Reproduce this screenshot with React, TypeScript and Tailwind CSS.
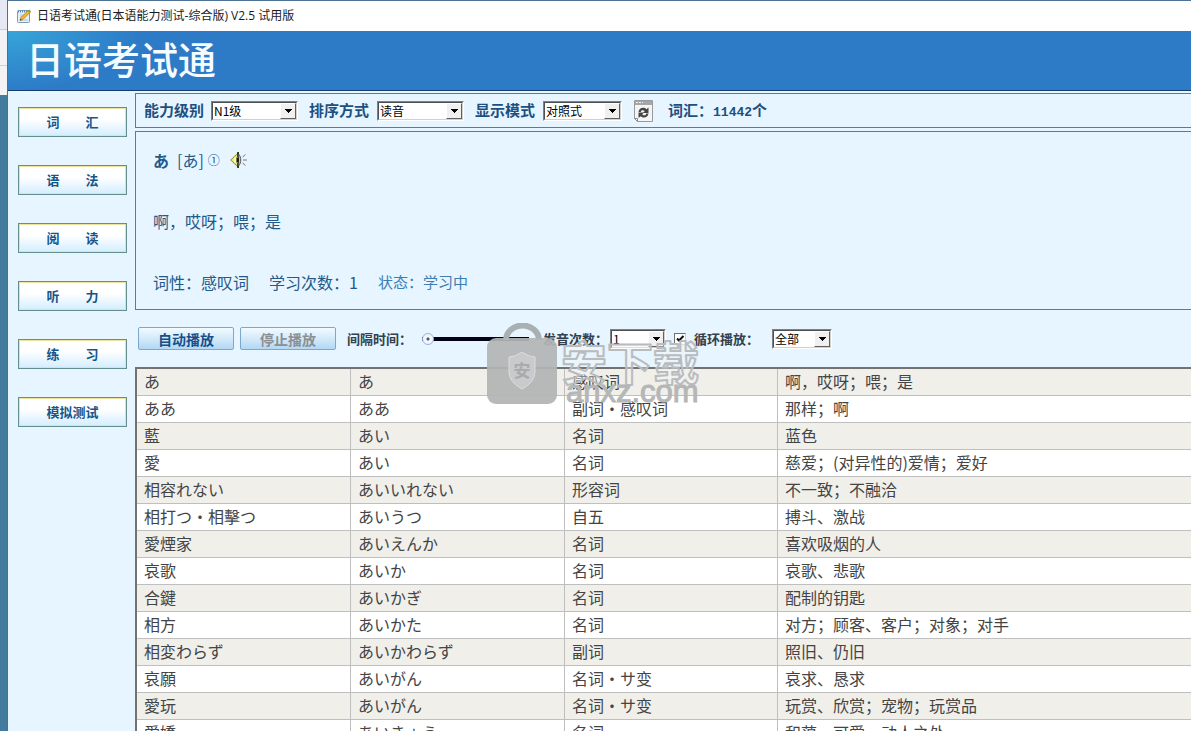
import { useId, useState } from 'react';

const NAV_ITEMS = ['词　　汇', '语　　法', '阅　　读', '听　　力', '练　　习', '模拟测试'];

const WORDS = [
    { word: 'あ', kana: 'あ', type: '感叹词', meaning: '啊，哎呀；喂；是' },
    { word: 'ああ', kana: 'ああ', type: '副词・感叹词', meaning: '那样；啊' },
    { word: '藍', kana: 'あい', type: '名词', meaning: '蓝色' },
    { word: '愛', kana: 'あい', type: '名词', meaning: '慈爱；(对异性的)爱情；爱好' },
    { word: '相容れない', kana: 'あいいれない', type: '形容词', meaning: '不一致；不融洽' },
    { word: '相打つ・相擊つ', kana: 'あいうつ', type: '自五', meaning: '搏斗、激战' },
    { word: '愛煙家', kana: 'あいえんか', type: '名词', meaning: '喜欢吸烟的人' },
    { word: '哀歌', kana: 'あいか', type: '名词', meaning: '哀歌、悲歌' },
    { word: '合鍵', kana: 'あいかぎ', type: '名词', meaning: '配制的钥匙' },
    { word: '相方', kana: 'あいかた', type: '名词', meaning: '对方；顾客、客户；对象；对手' },
    { word: '相変わらず', kana: 'あいかわらず', type: '副词', meaning: '照旧、仍旧' },
    { word: '哀願', kana: 'あいがん', type: '名词・サ变', meaning: '哀求、恳求' },
    { word: '愛玩', kana: 'あいがん', type: '名词・サ变', meaning: '玩赏、欣赏；宠物；玩赏品' },
    { word: '愛嬌', kana: 'あいきょう', type: '名词', meaning: '和蔼、可爱、动人之处' },
];

type WinSelectProps = {
    id: string;
    options: string[];
    className: string;
};

const WinSelect = ({ id, options, className }: WinSelectProps) => (
    <div className={`relative h-5 shrink-0 border border-t-[#808080] border-l-[#808080] border-r-white border-b-white ${className}`}>
        <select
            id={id}
            className="block h-full w-full appearance-none border border-t-[#505050] border-l-[#505050] border-r-[#d4d0c8] border-b-[#d4d0c8] bg-white pl-px text-xs leading-4 font-normal text-black outline-none"
        >
            {options.map(option => (
                <option key={option}>{option}</option>
            ))}
        </select>
        <span className="pointer-events-none absolute top-px right-px bottom-px flex w-4 items-center justify-center border border-t-white border-l-white border-r-[#606060] border-b-[#606060] bg-[#f0f0f0]">
            <svg width="7" height="4" viewBox="0 0 7 4" shapeRendering="crispEdges">
                <path d="M0 0h7v1H0zM1 1h5v1H1zM2 2h3v1H2zM3 3h1v1H3z" fill="#000" />
            </svg>
        </span>
    </div>
);

const NotepadIcon = () => (
    <svg width="14" height="14" viewBox="0 0 14 14">
        <rect x="0.5" y="1.5" width="12" height="12" rx="1" fill="#e4f1fb" stroke="#7e9cb8" />
        <path d="M1 2.5h11" stroke="#5a87b5" strokeWidth="2" strokeDasharray="1 1" />
        <path d="M3 6h5M3 8h4M3 11h8" stroke="#a9c4dd" />
        <path d="M4 8.5 11 1.5 13 3.5 6 10.500 3 11.500z" fill="#f4b52f" stroke="#b5771b" strokeWidth="0.7" />
        <path d="M11 1.500 12.200 0.400 14 2.200 13 3.500z" fill="#5fae3c" />
        <path d="M3 11.500 3.500 9.800 4.700 11z" fill="#333" />
    </svg>
);

const RefreshIcon = () => (
    <svg width="19" height="22" viewBox="0 0 19 22">
        <path d="M0.5 0.500h18v21h-15l-3-3z" fill="#f4f4f4" stroke="#9a9a9a" />
        <path d="M1 1h17v4H1z" fill="#a6a6a6" />
        <path d="M2 2.500h7" stroke="#eee" strokeDasharray="2 1" />
        <path d="M0.5 18.500h3v3z" fill="#fff" stroke="#888" />
        <path d="M4.500 12C5 7.500 10 6.500 12.500 9.200L14.500 7.500V13H9l1.800-1.900C9 9.500 7 10 6.800 12z" fill="#444" />
        <path d="M14.500 13.500C14 18 9 18.500 6.600 16.200L4.500 18V12.500H10L8.200 14.500C10 16 12 15.500 12.200 13.500z" fill="#444" />
    </svg>
);

const SpeakerIcon = () => (
    <svg width="17" height="18" viewBox="0 0 17 18">
        <path d="M0.700 9 8.500 1.500v15z" fill="#e8e86a" stroke="#8c8a2c" />
        <path d="M5 6.500v5" stroke="#fafac0" strokeWidth="2" />
        <path d="M8 1v5M8 12v5" stroke="#111" strokeWidth="1.500" />
        <path d="M8.500 3c3 3 3 9 0 12z" fill="#c9c9c9" stroke="#555" />
        <path d="M6.500 6.500h2.200v5H6.500z" fill="#111" />
        <path d="m12.500 6 3-2.500M13 9h4M12.500 12l3 2.500" stroke="#777" />
    </svg>
);

const Watermark = () => (
    <div className="pointer-events-none absolute top-[323px] left-[487px]">
        <svg width="216" height="84" viewBox="0 0 216 84">
            <path d="M19 17a16.500 14.500 0 0 1 33 0" fill="none" stroke="#a9b0b3" strokeWidth="6" />
            <rect x="0" y="15" width="70" height="66" rx="9" fill="#b3b5b5" fillOpacity="0.93" />
            <path d="M35 29q7 5 13 5v15q0 10-13 17-13-7-13-17V34q6 0 13-5z" fill="#c8cacb" stroke="#dcdddd" />
            <text x="35" y="54" textAnchor="middle" fontSize="17" fontWeight="700" fill="#a9abac" fontFamily='"Noto Sans CJK SC", sans-serif'>安</text>
            <g fontFamily='"Noto Sans CJK SC", sans-serif' fontSize="46" fontWeight="700" strokeLinejoin="round">
                <text x="74" y="57" fill="#f4f6f6" fillOpacity="0.4" stroke="#b9bcbe" strokeWidth="2">安下载</text>
            </g>
            <text x="79" y="79" fontSize="31" fill="#b4b6b7" stroke="#b4b6b7" strokeWidth="1" fontFamily='"Liberation Sans", sans-serif'>anxz.com</text>
        </svg>
    </div>
);

const App = () => {
    const uid = useId();
    const [interval, setIntervalValue] = useState(0);
    const [loop, setLoop] = useState(true);

    return (
        <div className="relative flex h-screen overflow-hidden bg-[#e6f5ff] font-['Noto_Sans_CJK_SC',sans-serif]">
            {/* Sliver of the desktop behind the window */}
            <div className="flex w-2 shrink-0 flex-col border-r border-[#3f7598]">
                <div className="h-[30px] border-b border-[#c9cbd6] bg-[#e6e8f4]" />
                <div className="h-9 border-b border-[#d0d0d0] bg-[#f3f3f5]" />
                <div className="h-[29px] bg-[#f3f3f5]" />
                <div className="flex-1 bg-[#417b9e]" />
            </div>

            <div className="flex min-w-0 flex-1 flex-col border-t border-[#4c7396]">
                <div className="flex h-[30px] shrink-0 items-center gap-1.5 bg-white pl-[9px] font-['Open_Sans','Noto_Sans_CJK_SC',sans-serif] text-xs text-[#1a1a1a]">
                    <NotepadIcon />
                    <span>日语考试通(日本语能力测试-综合版) V2.5 试用版</span>
                </div>

                <header className="flex h-[60px] shrink-0 items-center border-b border-[#123f6b] bg-[#2d7bc7] bg-[radial-gradient(130px_60px_at_top_left,#36a5d8,transparent)] pb-1.5 pl-[18px]">
                    <h1 className="text-[38px] leading-none font-medium text-[#f4fcff]">日语考试通</h1>
                </header>

                <div className="flex min-h-0 flex-1">
                    <nav className="flex w-[127px] shrink-0 flex-col gap-7 pt-4 pr-2 pl-2.5">
                        {NAV_ITEMS.map(item => (
                            <button
                                key={item}
                                className="h-[30px] shrink-0 border border-[#648f8c] bg-linear-to-b from-white from-40% to-[#d3edff] text-[13px] leading-7 font-bold text-[#15568a] inset-ring inset-ring-[#ece49a]"
                            >
                                {item}
                            </button>
                        ))}
                    </nav>

                    <main className="flex min-w-0 flex-1 flex-col pt-0.5">
                        <section className="flex h-[35px] shrink-0 items-center border-y border-l border-[#4c7fae] pl-2 text-[15px] font-bold text-[#1d5080]">
                            <label htmlFor={`${uid}-level`}>能力级别</label>
                            <WinSelect id={`${uid}-level`} options={['N1级', 'N2级', 'N3级']} className="ml-[7px] w-[87px]" />
                            <label htmlFor={`${uid}-sort`} className="ml-[11px]">排序方式</label>
                            <WinSelect id={`${uid}-sort`} options={['读音', '词性']} className="ml-2 w-[87px]" />
                            <label htmlFor={`${uid}-mode`} className="ml-[11px]">显示模式</label>
                            <WinSelect id={`${uid}-mode`} options={['对照式', '单词式']} className="ml-2 w-[79px]" />
                            <button aria-label="刷新" className="ml-3"><RefreshIcon /></button>
                            <span className="ml-[15px]">
                                词汇：<span className="font-['Liberation_Mono',monospace] text-[13px]">11442</span>个
                            </span>
                        </section>

                        <section className="mt-[3px] flex h-[179px] shrink-0 flex-col justify-between border-y border-l border-[#4c7fae] px-[17px] pt-4 pb-[15px] text-base text-[#24598a]">
                            <div className="flex items-center">
                                <strong>あ</strong>
                                <span className="ml-2">[あ]</span>
                                <span className="ml-1 text-xs">①</span>
                                <button aria-label="发音" className="ml-2.5"><SpeakerIcon /></button>
                            </div>
                            <p>啊，哎呀；喂；是</p>
                            <div className="flex items-center gap-5">
                                <span>词性：感叹词</span>
                                <span>学习次数：1</span>
                                <span className="text-[15px] text-[#3c7db4]">状态：学习中</span>
                            </div>
                        </section>

                        <section className="flex h-[57px] shrink-0 items-center pl-[3px] text-[13px] font-bold text-[#33404d]">
                            <button className="h-[23px] w-24 rounded-xs border border-[#7ba9cc] bg-linear-to-b from-[#f2faff] via-[#d3eafa] to-[#b3d7f3] text-sm leading-5 text-[#15508a]">
                                自动播放
                            </button>
                            <button disabled className="ml-1.5 h-[23px] w-24 rounded-xs border border-[#7ba9cc] bg-linear-to-b from-[#f2faff] via-[#d3eafa] to-[#b3d7f3] text-sm leading-5 text-[#8a8f94]">
                                停止播放
                            </button>
                            <label htmlFor={`${uid}-interval`} className="ml-[11px]">间隔时间：</label>
                            <input
                                id={`${uid}-interval`}
                                type="range"
                                min={0}
                                max={10}
                                value={interval}
                                onChange={e => setIntervalValue(Number(e.target.value))}
                                className="ml-2.5 h-3 w-[107px] appearance-none bg-transparent [&::-webkit-slider-runnable-track]:h-1 [&::-webkit-slider-runnable-track]:bg-[#000018] [&::-webkit-slider-thumb]:-mt-1 [&::-webkit-slider-thumb]:size-3 [&::-webkit-slider-thumb]:appearance-none [&::-webkit-slider-thumb]:rounded-full [&::-webkit-slider-thumb]:border [&::-webkit-slider-thumb]:border-[#9ab4d8] [&::-webkit-slider-thumb]:bg-[radial-gradient(circle,#555_0_1px,#eef6ff_2px_5px)]"
                            />
                            <label htmlFor={`${uid}-times`} className="ml-3.5">发音次数：</label>
                            <WinSelect id={`${uid}-times`} options={['1', '2', '3']} className="ml-0.5 w-14" />
                            <span className="relative ml-2 size-3">
                                <input
                                    id={`${uid}-loop`}
                                    type="checkbox"
                                    checked={loop}
                                    onChange={() => setLoop(!loop)}
                                    className="block size-3 appearance-none border border-t-[#707070] border-l-[#707070] border-r-[#d4d0c8] border-b-[#d4d0c8] bg-white"
                                />
                                {loop && (
                                    <svg width="12" height="12" viewBox="0 0 12 12" className="pointer-events-none absolute top-0 left-0">
                                        <path d="M3 5.500 5 7.500 9.500 3" fill="none" stroke="#111" strokeWidth="2" />
                                    </svg>
                                )}
                            </span>
                            <label htmlFor={`${uid}-loop`} className="ml-2">循环播放：</label>
                            <WinSelect id={`${uid}-range`} options={['全部', '部分']} className="ml-[13px] w-[60px]" />
                        </section>

                        <div className="min-h-0 flex-1 overflow-hidden border-t-2 border-l-2 border-[#727272] bg-white">
                            <table className="w-full table-fixed border-separate border-spacing-0 text-left text-base text-[#444]">
                                <colgroup>
                                    <col className="w-[214px]" />
                                    <col className="w-[214px]" />
                                    <col className="w-[213px]" />
                                    <col />
                                </colgroup>
                                <tbody className="[&_td]:h-[27px] [&_td]:border-b [&_td]:border-[#bfbfbf] [&_td]:pt-0 [&_td]:pb-0.5 [&_td]:pl-[7px] [&_td]:leading-6 [&_td:not(:last-child)]:border-r">
                                    {WORDS.map((row, i) => (
                                        <tr key={i} className="odd:bg-[#f0efea]">
                                            <td>{row.word}</td>
                                            <td>{row.kana}</td>
                                            <td>{row.type}</td>
                                            <td>{row.meaning}</td>
                                        </tr>
                                    ))}
                                </tbody>
                            </table>
                        </div>
                    </main>
                </div>
            </div>

            <Watermark />
        </div>
    );
};

export default App;
